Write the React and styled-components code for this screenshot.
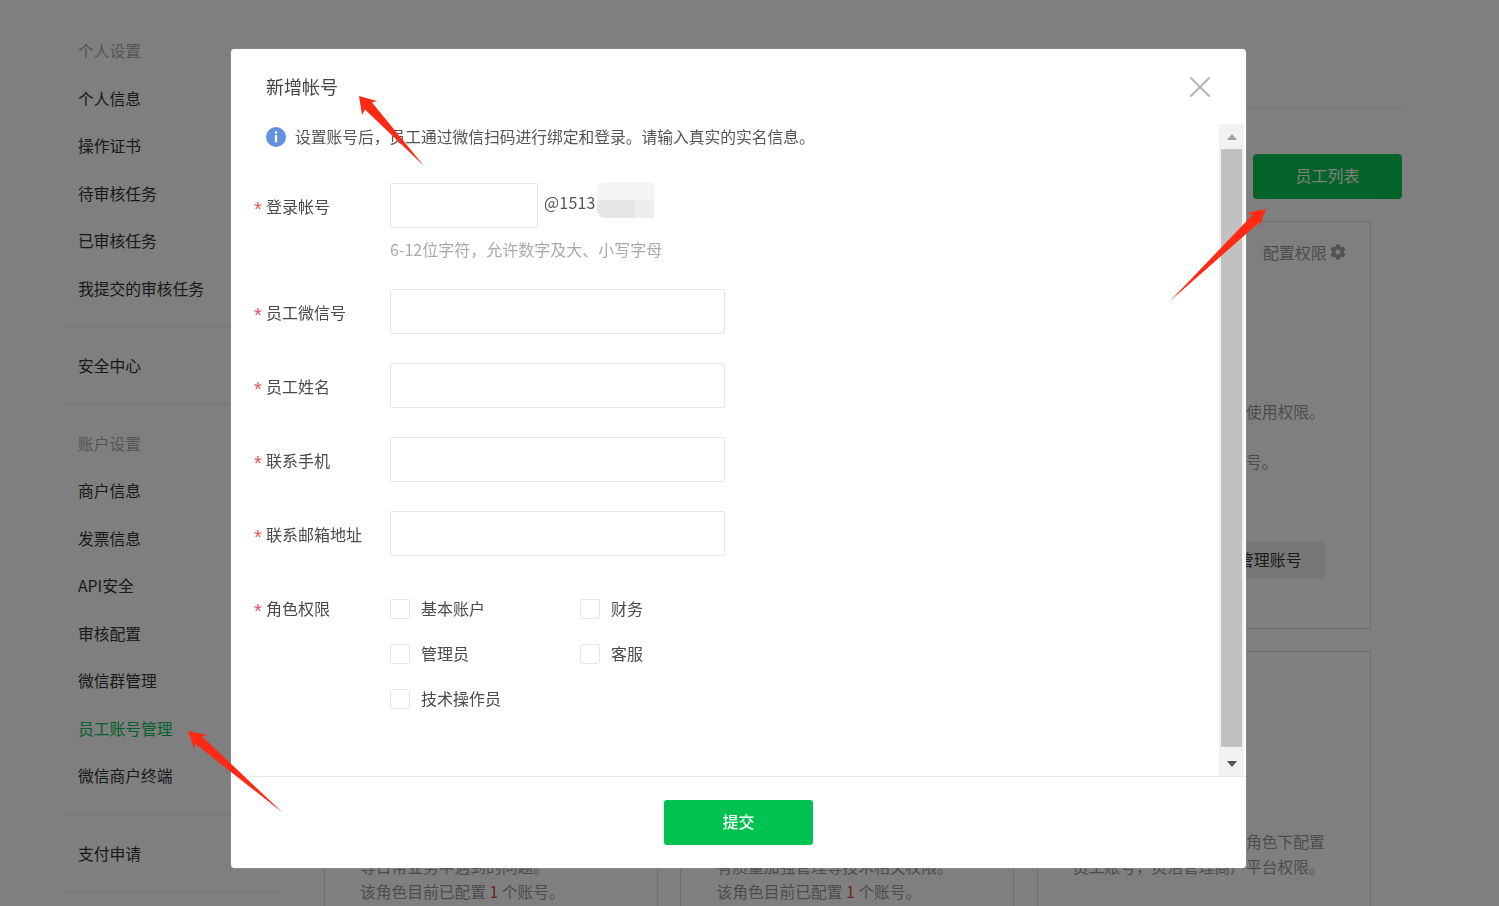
import styled, { createGlobalStyle } from "styled-components";
import { FaCog } from "react-icons/fa";

const GlobalStyle = createGlobalStyle`
  html, body {
    margin: 0;
    height: 100%;
    overflow: hidden;
    background: #fff;
    font-family: "Noto Sans CJK SC", "Liberation Sans", sans-serif;
    font-size: 15.75px;
    color: #333;
  }
  * { box-sizing: border-box; }
`;

const Page = styled.div`
  display: flex;
  height: 100vh;
  overflow: hidden;
  background: #fff;
`;

/* sidebar */
const Sidebar = styled.aside`
  flex: none;
  width: 279px;
  padding: 12px 0 0 64px;
  background: #fcfffd;
`;

const MenuGroup = styled.div`
  padding: 16px 0 13px;
  border-bottom: 1px solid #e9ebe9;
`;

const MenuItem = styled.div`
  height: 47.5px;
  line-height: 45.5px;
  padding-left: 14px;
  white-space: nowrap;
  color: ${(p) => (p.$title ? "#aaa" : p.$active ? "#07c160" : "#333")};
`;

/* main content behind the mask */
const Main = styled.main`
  flex: 1;
  min-width: 0;
  padding: 0 97px 0 45px;
`;

const MainHeader = styled.div`
  height: 109px;
  border-bottom: 1px solid #eaeaea;
`;

const Toolbar = styled.div`
  display: flex;
  justify-content: flex-end;
  padding: 45px 0 22px;
`;

const PrimaryButton = styled.button`
  width: 149px;
  height: 45px;
  padding: 0 0 3px;
  border: 0;
  border-radius: 4px;
  background: #07c652;
  color: #fff;
  font: inherit;
  font-size: 16px;
`;

const CardGrid = styled.div`
  display: grid;
  grid-template-columns: repeat(3, 334px);
  grid-auto-rows: 408px;
  column-gap: 22.4px;
  row-gap: 22px;
`;

const Card = styled.section`
  border: 1px solid #ddd;
  padding: 18px 24px 0 35px;
`;

const CardHead = styled.div`
  display: flex;
  justify-content: flex-end;
  align-items: center;
  gap: 3px;
  height: 24px;
  margin-bottom: 1px;
  color: #999;
  font-size: 16px;
  visibility: ${(p) => (p.$hidden ? "hidden" : "visible")};
  svg { color: #a4a4a4; }
`;

const CardText = styled.p`
  margin: 135px 0 0;
  line-height: 25px;
  color: #999;
  white-space: nowrap;
`;

const CountNum = styled.span`
  color: #d84a3c;
`;

const CardActions = styled.div`
  display: flex;
  justify-content: flex-end;
  margin: 67px 21px 0 0;
`;

const GhostButton = styled.button`
  width: 110px;
  height: 38px;
  padding: 0 0 2px;
  border: 0;
  border-radius: 4px;
  background: #eee;
  color: #333;
  font: inherit;
  font-size: 16px;
`;

/* modal */
const Mask = styled.div`
  position: fixed;
  inset: 0;
  padding: 49px 0 0 231px;
  background: rgba(0, 0, 0, 0.5);
`;

const Modal = styled.div`
  display: flex;
  flex-direction: column;
  width: 1015px;
  height: 819px;
  border-radius: 4px;
  background: #fff;
  box-shadow: 0 0 1px rgba(255, 255, 255, 0.7);
`;

const ModalHeader = styled.div`
  flex: none;
  display: flex;
  justify-content: space-between;
  align-items: flex-start;
  height: 75px;
  padding: 25px 36px 0 35px;
`;

const ModalTitle = styled.div`
  font-size: 18px;
  line-height: 24px;
  color: #444;
`;

const CloseIcon = styled.svg`
  width: 20px;
  height: 20px;
  margin-top: 3px;
  stroke: #b4b4b4;
  stroke-width: 2;
`;

const ModalBody = styled.div`
  flex: 1;
  min-height: 0;
  display: flex;
  padding-right: 2px;
`;

const Form = styled.div`
  flex: 1;
  display: flex;
  flex-direction: column;
  gap: 29px;
  padding-left: 23px;
  font-size: 16px;
`;

const Notice = styled.div`
  display: flex;
  align-items: flex-start;
  gap: 9px;
  height: 26px;
  margin: 0 0 4px 12px;
  line-height: 26px;
  font-size: 15.75px;
  color: #555;
  svg { margin-top: 3px; }
`;

const Row = styled.div`
  display: flex;
  align-items: ${(p) => (p.$top ? "flex-start" : "center")};
  margin-top: ${(p) => p.$offset || 0}px;
`;

const Label = styled.div`
  flex: none;
  display: flex;
  align-items: center;
  width: 136px;
  height: ${(p) => (p.$compact ? 20 : 45)}px;
  padding-bottom: ${(p) => (p.$compact ? 2 : 0)}px;
  color: #4a4a4a;
`;

const Star = styled.span`
  flex: none;
  width: 12px;
  height: 16px;
  padding-top: 3px;
  line-height: 16px;
  color: #e8505b;
  font-size: 20px;
  font-family: "Liberation Sans", sans-serif;
`;

const Input = styled.input`
  display: block;
  width: ${(p) => p.$width || 335}px;
  height: 45px;
  padding: 0 10px;
  border: 1px solid #e6e6e6;
  border-radius: 2px;
  background: #fff;
  outline: none;
`;

const DomainRow = styled.div`
  display: flex;
  align-items: flex-start;
`;

const Domain = styled.span`
  margin-left: 6px;
  line-height: 38px;
  letter-spacing: 0.2px;
  color: #555;
`;

const BlurPatch = styled.div`
  width: 57px;
  height: 36px;
  margin: -1px 0 0 1px;
  border-radius: 8px 0 0 8px;
  background:
    linear-gradient(#f5f5f5 50%, transparent 50%),
    linear-gradient(90deg, #e6e6e6 67%, #eeeeee 67%);
`;

const Hint = styled.div`
  margin: 10px 0 -1px;
  line-height: 23px;
  color: #aaa;
`;

const RoleGrid = styled.div`
  display: grid;
  grid-template-columns: 190px 190px;
  row-gap: 25px;
`;

const CheckItem = styled.label`
  display: flex;
  align-items: center;
  gap: 11px;
  height: 20px;
  color: #4a4a4a;
`;

const CheckText = styled.span`
  margin-top: -2px;
`;

const CheckBox = styled.span`
  flex: none;
  width: 20px;
  height: 20px;
  border: 1px solid #e6e6e6;
  border-radius: 2px;
`;

const ScrollTrack = styled.div`
  flex: none;
  display: flex;
  flex-direction: column;
  width: 25px;
  background: #f1f1f1;
`;

const ScrollArrow = styled.div`
  flex: ${(p) => (p.$down ? 1 : "none")};
  display: flex;
  justify-content: center;
  height: ${(p) => (p.$down ? "auto" : "25px")};
  padding-top: ${(p) => (p.$down ? 14 : 10)}px;
  &::before {
    content: "";
    width: 0;
    height: 0;
    border-left: 5.5px solid transparent;
    border-right: 5.5px solid transparent;
    ${(p) =>
      p.$down
        ? "border-top: 6px solid #505050;"
        : "border-bottom: 6px solid #a3a3a3;"}
  }
`;

const ScrollThumb = styled.div`
  flex: none;
  height: 598px;
  margin: 0 2px;
  background: #c1c1c1;
`;

const ModalFooter = styled.div`
  flex: none;
  display: flex;
  justify-content: center;
  height: 92px;
  padding-top: 23px;
  border-top: 1px solid #e9e9e9;
`;

const SubmitButton = styled.button`
  width: 149px;
  height: 45px;
  padding: 0 0 3px;
  border: 0;
  border-radius: 3px;
  background: #00c250;
  color: #fff;
  font: inherit;
  font-size: 16px;
  font-weight: 500;
`;

/* red annotation arrows drawn over the screenshot */
const Annotations = styled.svg`
  position: fixed;
  inset: 0;
  width: 1499px;
  height: 906px;
  pointer-events: none;
  polygon { fill: #ff2a14; }
`;

const menuGroups = [
  [
    { text: "个人设置", title: true },
    { text: "个人信息" },
    { text: "操作证书" },
    { text: "待审核任务" },
    { text: "已审核任务" },
    { text: "我提交的审核任务" },
  ],
  [{ text: "安全中心" }],
  [
    { text: "账户设置", title: true },
    { text: "商户信息" },
    { text: "发票信息" },
    { text: "API安全" },
    { text: "审核配置" },
    { text: "微信群管理" },
    { text: "员工账号管理", active: true },
    { text: "微信商户终端" },
  ],
  [{ text: "支付申请" }],
];

const cards = [
  { lines: ["负责商户平台日常业务，", "可查看交易和资金数据。"], count: 1 },
  { lines: ["负责商户平台资金管理，", "可查看和导出账单数据。"], count: 1 },
  { lines: ["拥有商户平台全部功能的使用权限。", "可管理员工账号。"], count: 1 },
  { lines: ["负责处理用户的咨询，", "等日常业务中遇到的问题。"], count: 1 },
  { lines: ["负责技术对接工作，", "有质量加强管理等技术相关权限。"], count: 1 },
  { lines: ["商户管理员可根据需要在角色下配置", "员工账号，灵活管理商户平台权限。"], noHead: true },
];

const fields = ["员工微信号", "员工姓名", "联系手机", "联系邮箱地址"];
const roles = ["基本账户", "财务", "管理员", "客服", "技术操作员"];

const InfoIcon = () => (
  <svg width="20" height="20" viewBox="0 0 20 20">
    <circle cx="10" cy="10" r="10" fill="#6390e0" />
    <circle cx="10" cy="5.6" r="1.3" fill="#fff" />
    <rect x="8.9" y="8" width="2.2" height="7.4" fill="#fff" />
  </svg>
);

const App = () => (
  <>
    <GlobalStyle />
    <Page>
      <Sidebar>
        {menuGroups.map((group, i) => (
          <MenuGroup key={i}>
            {group.map((item) => (
              <MenuItem key={item.text} $title={item.title} $active={item.active}>
                {item.text}
              </MenuItem>
            ))}
          </MenuGroup>
        ))}
      </Sidebar>
      <Main>
        <MainHeader />
        <Toolbar>
          <PrimaryButton>员工列表</PrimaryButton>
        </Toolbar>
        <CardGrid>
          {cards.map((card, i) => (
            <Card key={i}>
              <CardHead $hidden={card.noHead}>
                配置权限 <FaCog size={16} />
              </CardHead>
              <CardText>
                {card.lines[0]}
                <br />
                {card.lines[1]}
                {card.count && (
                  <>
                    <br />
                    该角色目前已配置 <CountNum>{card.count}</CountNum> 个账号。
                  </>
                )}
              </CardText>
              <CardActions>
                <GhostButton>管理账号</GhostButton>
              </CardActions>
            </Card>
          ))}
        </CardGrid>
      </Main>
    </Page>

    <Mask>
      <Modal>
        <ModalHeader>
          <ModalTitle>新增帐号</ModalTitle>
          <CloseIcon viewBox="0 0 20 20">
            <line x1="0.5" y1="0.5" x2="19.5" y2="19.5" />
            <line x1="19.5" y1="0.5" x2="0.5" y2="19.5" />
          </CloseIcon>
        </ModalHeader>
        <ModalBody>
          <Form>
            <Notice>
              <InfoIcon />
              设置账号后，员工通过微信扫码进行绑定和登录。请输入真实的实名信息。
            </Notice>
            <Row $top>
              <Label>
                <Star>*</Star>登录帐号
              </Label>
              <div>
                <DomainRow>
                  <Input $width={148} />
                  <Domain>@1513</Domain>
                  <BlurPatch />
                </DomainRow>
                <Hint>6-12位字符，允许数字及大、小写字母</Hint>
              </div>
            </Row>
            {fields.map((text) => (
              <Row key={text}>
                <Label>
                  <Star>*</Star>
                  {text}
                </Label>
                <Input />
              </Row>
            ))}
            <Row $top $offset={14}>
              <Label $compact>
                <Star>*</Star>角色权限
              </Label>
              <RoleGrid>
                {roles.map((role) => (
                  <CheckItem key={role}>
                    <CheckBox />
                    <CheckText>{role}</CheckText>
                  </CheckItem>
                ))}
              </RoleGrid>
            </Row>
          </Form>
          <ScrollTrack>
            <ScrollArrow />
            <ScrollThumb />
            <ScrollArrow $down />
          </ScrollTrack>
        </ModalBody>
        <ModalFooter>
          <SubmitButton>提交</SubmitButton>
        </ModalFooter>
      </Modal>
    </Mask>

    <Annotations viewBox="0 0 1499 906">
      <polygon points="359,96 377,101 372,102.6 424,166 365,109.4 362,115" />
      <polygon points="1266,209 1259,227 1259.4,222.3 1170,301 1252.4,215.1 1247,213" />
      <polygon points="188,731 208,735 201.9,736.2 283,813 195.3,743.8 194,749" />
    </Annotations>
  </>
);

export default App;
